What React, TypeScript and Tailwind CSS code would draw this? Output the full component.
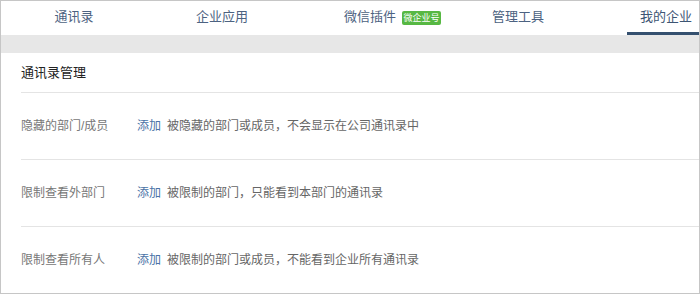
import React from "react";

const tabs = [
  { label: "通讯录" },
  { label: "企业应用" },
  { label: "微信插件", badge: "微企业号" },
  { label: "管理工具" },
  { label: "我的企业", active: true },
];

const rows = [
  { label: "隐藏的部门/成员", desc: "被隐藏的部门或成员，不会显示在公司通讯录中" },
  { label: "限制查看外部门", desc: "被限制的部门，只能看到本部门的通讯录" },
  { label: "限制查看所有人", desc: "被限制的部门或成员，不能看到企业所有通讯录" },
];

const App: React.FC = () => {
  return (
    <div
      className="w-[700px] h-[294px] overflow-hidden border border-[#c6c6c6] bg-white flex flex-col"
      style={{ fontFamily: '"Liberation Sans", "Noto Sans CJK SC", sans-serif' }}
    >
      {/* Tabs */}
      <div className="h-[34px] shrink-0 flex -ml-[1px]">
        {tabs.map((tab) => (
          <div key={tab.label} className="w-[148px] shrink-0 flex justify-center">
            <div
              className={
                "relative h-full px-[13px] flex items-center text-[13px] leading-none border-b-[3px] " +
                (tab.active ? "border-[#34506f] text-[#3d5573]" : "border-transparent text-[#4c6281]")
              }
            >
              <span className="-mt-[1px]">{tab.label}</span>
              {tab.badge && (
                <span className="absolute left-[calc(100%-7px)] top-[10px] h-[14px] w-[39px] rounded-[2px] bg-[#57b843] text-white text-[9px] leading-[14px] text-center whitespace-nowrap">
                  {tab.badge}
                </span>
              )}
            </div>
          </div>
        ))}
      </div>

      <div className="h-[18px] shrink-0 bg-[#e7e7e7]" />

      {/* Content */}
      <div className="pl-5 flex flex-col">
        <div className="h-[39px] flex items-center text-[13px] text-[#222]">通讯录管理</div>
        {rows.map((row) => (
          <div key={row.label} className="h-[67px] border-t border-[#e4e4e4] flex items-center text-[12px]">
            <span className="w-[116px] text-[#777]">{row.label}</span>
            <span className="text-[#4a72a6] mr-[6px]">添加</span>
            <span className="text-[#666]">{row.desc}</span>
          </div>
        ))}
      </div>
    </div>
  );
};

export default App;
